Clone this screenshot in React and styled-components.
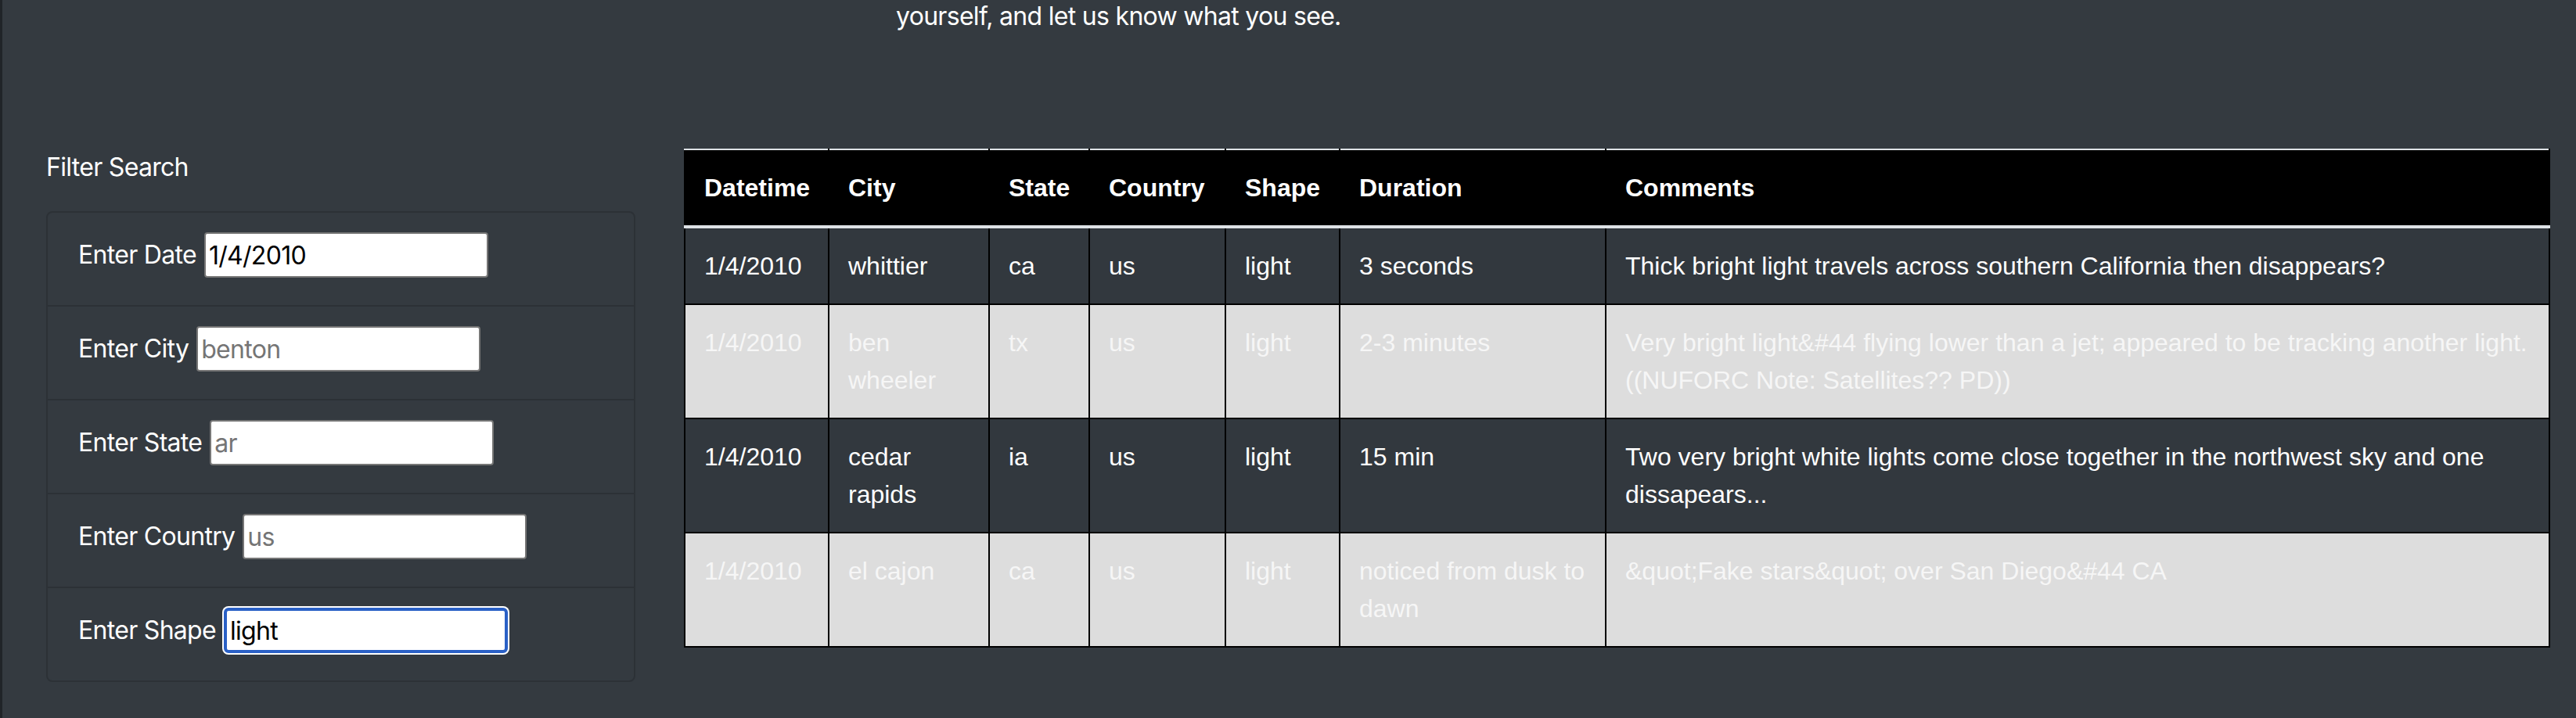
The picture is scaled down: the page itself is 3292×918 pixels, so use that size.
import styled, { createGlobalStyle } from 'styled-components';

const sightings = [
  {
    datetime: '1/4/2010',
    city: 'whittier',
    state: 'ca',
    country: 'us',
    shape: 'light',
    duration: '3 seconds',
    comments: 'Thick bright light travels across southern California then disappears?',
  },
  {
    datetime: '1/4/2010',
    city: 'ben wheeler',
    state: 'tx',
    country: 'us',
    shape: 'light',
    duration: '2-3 minutes',
    comments:
      'Very bright light&#44 flying lower than a jet; appeared to be tracking another light. ((NUFORC Note: Satellites?? PD))',
  },
  {
    datetime: '1/4/2010',
    city: 'cedar rapids',
    state: 'ia',
    country: 'us',
    shape: 'light',
    duration: '15 min',
    comments: 'Two very bright white lights come close together in the northwest sky and one dissapears...',
  },
  {
    datetime: '1/4/2010',
    city: 'el cajon',
    state: 'ca',
    country: 'us',
    shape: 'light',
    duration: 'noticed from dusk to dawn',
    comments: '&quot;Fake stars&quot; over San Diego&#44 CA',
  },
];

const filters = [
  { id: 'date', label: 'Enter Date', value: '1/4/2010' },
  { id: 'city', label: 'Enter City', placeholder: 'benton' },
  { id: 'state', label: 'Enter State', placeholder: 'ar' },
  { id: 'country', label: 'Enter Country', placeholder: 'us' },
  { id: 'shape', label: 'Enter Shape', value: 'light', focused: true },
];

const columns = [
  { key: 'datetime', title: 'Datetime', width: 184 },
  { key: 'city', title: 'City', width: 205 },
  { key: 'state', title: 'State', width: 128 },
  { key: 'country', title: 'Country', width: 174 },
  { key: 'shape', title: 'Shape', width: 146 },
  { key: 'duration', title: 'Duration', width: 340 },
  { key: 'comments', title: 'Comments', width: 1206 },
];

export default function App() {
  return (
    <>
      <GlobalStyle />
      <Page>
        <Intro>yourself, and let us know what you see.</Intro>
        <Main>
          <Sidebar>
            <SideTitle>Filter Search</SideTitle>
            <FilterList>
              {filters.map((f) => (
                <FilterItem key={f.id}>
                  <FilterLabel htmlFor={f.id}>{f.label}</FilterLabel>
                  <FilterInput
                    id={f.id}
                    type="text"
                    defaultValue={f.value}
                    placeholder={f.placeholder}
                    $focused={f.focused}
                  />
                </FilterItem>
              ))}
            </FilterList>
          </Sidebar>

          <DataTable>
            <colgroup>
              {columns.map((c) => (
                <col key={c.key} style={{ width: c.width }} />
              ))}
            </colgroup>
            <thead>
              <tr>
                {columns.map((c) => (
                  <HeadCell key={c.key}>{c.title}</HeadCell>
                ))}
              </tr>
            </thead>
            <tbody>
              {sightings.map((row, i) => (
                <BodyRow key={i} $light={i % 2 === 1}>
                  {columns.map((c) => (
                    <Cell key={c.key}>{row[c.key]}</Cell>
                  ))}
                </BodyRow>
              ))}
            </tbody>
          </DataTable>
        </Main>
      </Page>
    </>
  );
}

const GlobalStyle = createGlobalStyle`
  html, body {
    margin: 0;
    padding: 0;
    background: #343a40;
  }
  * {
    box-sizing: border-box;
  }
`;

const Page = styled.div`
  min-height: 918px;
  overflow: hidden;
  background: #343a40;
  box-shadow: inset 3px 0 0 #202428;
  color: #fff;
  font-family: Inter, "Noto Sans", sans-serif;
  font-size: 32px;
  line-height: 48px;
  letter-spacing: -0.7px;
`;

const Intro = styled.p`
  margin: -3px 0 0;
  padding-left: 1145px;
  color: #fff;
`;

const Main = styled.div`
  display: flex;
  align-items: flex-start;
  margin-top: 145px;
  padding-left: 59px;
`;

const Sidebar = styled.aside`
  width: 753px;
  flex-shrink: 0;
  margin-right: 62px;
`;

const SideTitle = styled.h5`
  margin: 0 0 32px;
  font-size: 32px;
  font-weight: 400;
  line-height: 48px;
`;

const FilterList = styled.ul`
  list-style: none;
  margin: 0;
  padding: 0;
  border: 2px solid #2c3136;
  border-radius: 8px;
`;

const FilterItem = styled.li`
  display: flex;
  align-items: center;
  gap: 10px;
  padding: 25px 40px 35px 39px;
  border-bottom: 2px solid #2c3136;

  &:last-child {
    border-bottom: none;
  }
`;

const FilterLabel = styled.label`
  line-height: 58px;
  white-space: nowrap;
`;

const FilterInput = styled.input`
  width: 363px;
  height: 58px;
  padding: 0 4px;
  border: 2px solid #767676;
  border-radius: 4px;
  background: #fff;
  color: #000;
  font-family: Inter, "Noto Sans", sans-serif;
  font-size: 32px;
  letter-spacing: -0.7px;
  outline: none;

  &::placeholder {
    color: #757575;
  }

  ${(p) =>
    p.$focused &&
    `
    border: 4px solid #2a60c6;
    border-radius: 6px;
    box-shadow: 0 0 0 2px #fff;
  `}
`;

const DataTable = styled.table`
  width: 2383px;
  flex-shrink: 0;
  table-layout: fixed;
  border-collapse: collapse;
  font-family: "Liberation Sans", Arial, sans-serif;
  font-size: 32px;
  line-height: 48px;
  letter-spacing: normal;
`;

const HeadCell = styled.th`
  padding: 24px;
  background: #000;
  color: #fff;
  font-weight: 700;
  text-align: left;
  vertical-align: top;
  border-top: 2px solid #dee2e6;
  border-bottom: 4px solid #dee2e6;
  border-left: 2px solid #000;
  border-right: 2px solid #000;
`;

const BodyRow = styled.tr`
  background: ${(p) => (p.$light ? '#dddddd' : '#32383e')};
  color: ${(p) => (p.$light ? '#f6f6f6' : '#fff')};
`;

const Cell = styled.td`
  padding: 24px;
  vertical-align: top;
  border: 2px solid #000;
`;
